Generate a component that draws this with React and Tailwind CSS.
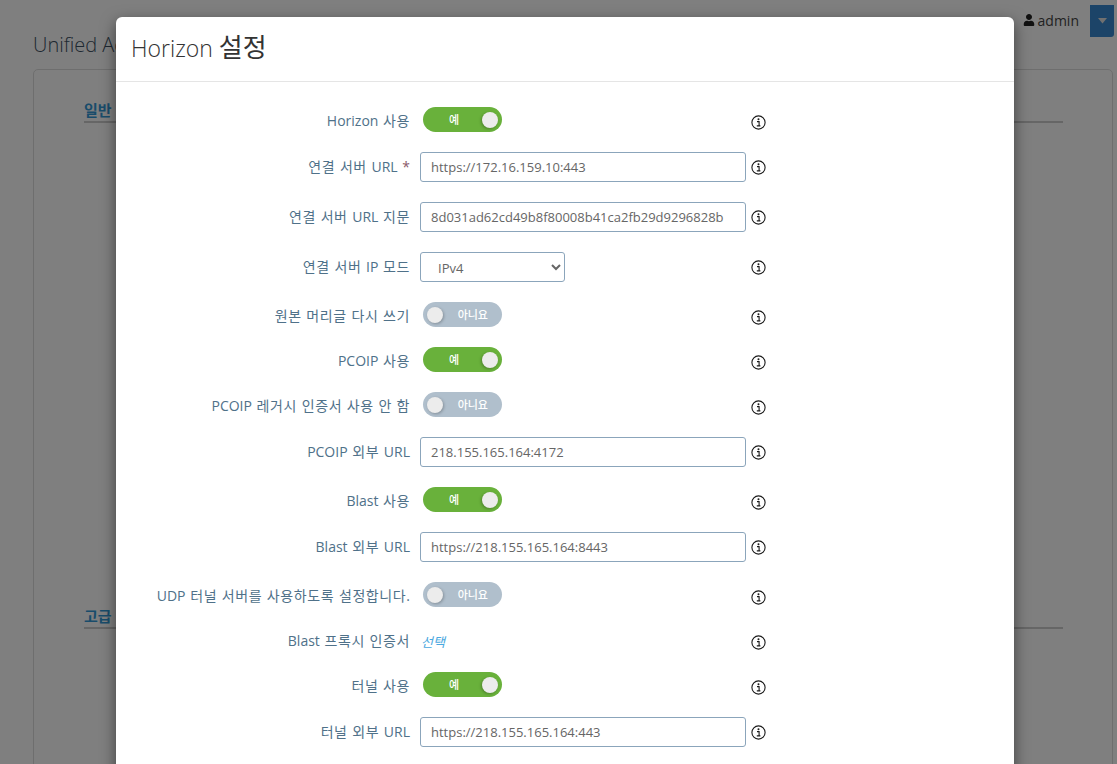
import { FaUser } from 'react-icons/fa'

const font = { sans: 'font-["Open_Sans","Noto_Sans_CJK_KR",sans-serif]' }

const rows = [
  { label: 'Horizon 사용', type: 'on', gap: 'mb-[15px]' },
  { label: '연결 서버 URL', required: true, type: 'input', value: 'https://172.16.159.10:443', gap: 'mb-[20px]' },
  { label: '연결 서버 URL 지문', type: 'input', value: '8d031ad62cd49b8f80008b41ca2fb29d9296828b', gap: 'mb-[20px]' },
  { label: '연결 서버 IP 모드', type: 'select', gap: 'mb-[20px]' },
  { label: '원본 머리글 다시 쓰기', type: 'off', gap: 'mb-[15px]' },
  { label: 'PCOIP 사용', type: 'on', gap: 'mb-[15px]' },
  { label: 'PCOIP 레거시 인증서 사용 안 함', type: 'off', gap: 'mb-[15px]' },
  { label: 'PCOIP 외부 URL', type: 'input', value: '218.155.165.164:4172', gap: 'mb-[20px]' },
  { label: 'Blast 사용', type: 'on', gap: 'mb-[15px]' },
  { label: 'Blast 외부 URL', type: 'input', value: 'https://218.155.165.164:8443', gap: 'mb-[20px]' },
  { label: 'UDP 터널 서버를 사용하도록 설정합니다.', type: 'off', gap: 'mb-[15px]' },
  { label: 'Blast 프록시 인증서', type: 'link', gap: 'mb-[15px]' },
  { label: '터널 사용', type: 'on', gap: 'mb-[15px]' },
  { label: '터널 외부 URL', type: 'input', value: 'https://218.155.165.164:443', gap: 'mb-[15px]' },
]

function InfoIcon() {
  return (
    <svg width="15" height="15" viewBox="0 0 15 15" fill="none" className="text-[#1a1a1a]">
      <circle cx="7.5" cy="7.5" r="6.6" stroke="currentColor" strokeWidth="1.1" />
      <circle cx="7.5" cy="4.3" r="1" fill="currentColor" />
      <path d="M6 6.6h2.1v4.1M5.8 10.9h3.6" stroke="currentColor" strokeWidth="1.1" />
    </svg>
  )
}

function Toggle({ on }) {
  if (on) {
    return (
      <div className="ml-[3px] w-[79px] h-[25px] rounded-[13px] bg-[#69b13b] flex items-center justify-between pl-[26px] pr-[3px]">
        <span className="pt-[1px] text-[11px] font-medium text-white">예</span>
        <span className="w-[16px] h-[16px] mr-[1px] rounded-full bg-[#ececec] shadow-[-1px_1px_3px_rgba(0,0,0,0.25)]" />
      </div>
    )
  }
  return (
    <div className="ml-[3px] w-[79px] h-[25px] rounded-[13px] bg-[#b0bfcc] flex items-center justify-between pl-[4px] pr-[14px]">
      <span className="w-[16px] h-[16px] rounded-full bg-[#ececec] shadow-[1px_1px_3px_rgba(0,0,0,0.25)]" />
      <span className="pt-[1px] text-[11px] font-medium text-white">아니요</span>
    </div>
  )
}

function Control({ row }) {
  if (row.type === 'on') return <Toggle on />
  if (row.type === 'off') return <Toggle />
  if (row.type === 'link') {
    return <a className="mt-[6px] ml-[1px] text-[13px] italic text-[#4aa8e0] leading-[18px] block">선택</a>
  }
  if (row.type === 'select') {
    return (
      <select className="w-[145px] h-[30px] pl-[13px] pt-[2px] rounded-[3px] border border-[#8ba5bb] bg-white text-[13px] text-[#666]">
        <option>IPv4</option>
      </select>
    )
  }
  return (
    <input
      readOnly
      value={row.value}
      className="w-[326px] h-[30px] px-[10px] rounded-[3px] border border-[#8ba5bb] bg-white text-[13px] text-[#666] outline-none"
    />
  )
}

// hangul runs sit wider than the latin ones in the labels
function LabelText({ text }) {
  return text.split(/([\uAC00-\uD7A3]+)/).map((part, i) =>
    i % 2 === 1
      ? <span key={i} className="tracking-[0.6px]">{part}</span>
      : part
  )
}

function FormRow({ row }) {
  const isInput = row.type === 'input' || row.type === 'select'
  return (
    <div className={`flex h-[30px] ${row.gap}`}>
      <label className={`w-[294px] shrink-0 text-right text-[14px] [word-spacing:1px] text-[#4f7189] whitespace-nowrap ${isInput ? 'leading-[30px]' : 'leading-[28px]'}`}>
        <LabelText text={row.label} />
        {row.required && <span className="text-[#8a5a6a]"> *</span>}
      </label>
      <div className="w-[341px] shrink-0 pl-[10px]">
        <Control row={row} />
      </div>
      <div className="h-[30px] flex items-center">
        <InfoIcon />
      </div>
    </div>
  )
}

export default function App() {
  return (
    <div className={`relative h-[764px] overflow-hidden bg-white ${font.sans}`}>
      {/* page behind the dialog */}
      <div className="flex justify-end items-start h-[37px] pt-[5px] pr-[3px]">
        <div className="flex items-center gap-[3px] h-[30px] mr-[11px] text-[14px] text-[#444]">
          <FaUser className="w-[12px] h-[12px] text-[#222]" />
          admin
        </div>
        <div className="w-[24px] h-[32px] rounded-br-[3px] bg-[#3889d0] flex items-center justify-center">
          <svg width="9" height="6" viewBox="0 0 9 6"><polygon points="0,0 9,0 4.5,5.5" fill="#e0e0e0" /></svg>
        </div>
      </div>
      <div className="pl-[33px] pr-[4px]">
        <h1 className="text-[20px] leading-[30px] font-light text-[#3d5163] whitespace-nowrap mb-[9px] -mt-[7px]">Unified Access Gateway</h1>
        <div className="h-[800px] border border-[#ddd] rounded-[5px] pl-[50px] pr-[49px] pt-[27px]">
          <h2 className="h-[26px] text-[15px] font-semibold text-[#3399d6] border-b-2 border-[#ccc] leading-[26px]">일반</h2>
          <h2 className="mt-[480px] h-[26px] text-[15px] font-semibold text-[#3399d6] border-b-2 border-[#ccc] leading-[26px]">고급</h2>
        </div>
      </div>

      <div className="absolute inset-0 bg-black/50" />

      {/* dialog */}
      <div className="absolute left-[116px] top-[17px] w-[898px] h-[900px] bg-white rounded-t-[6px] shadow-[0_5px_15px_rgba(0,0,0,0.5)]">
        <div className="h-[65px] border-b border-[#e5e5e5] pl-[15px] pt-[11px]">
          <h3 className="text-[23px] leading-[38px] font-light text-[#333] whitespace-nowrap">
            Horizon <span className="text-[26px] font-normal">설정</span>
          </h3>
        </div>
        <div className="pt-[25px]">
          {rows.map(row => <FormRow key={row.label} row={row} />)}
        </div>
      </div>
    </div>
  )
}
